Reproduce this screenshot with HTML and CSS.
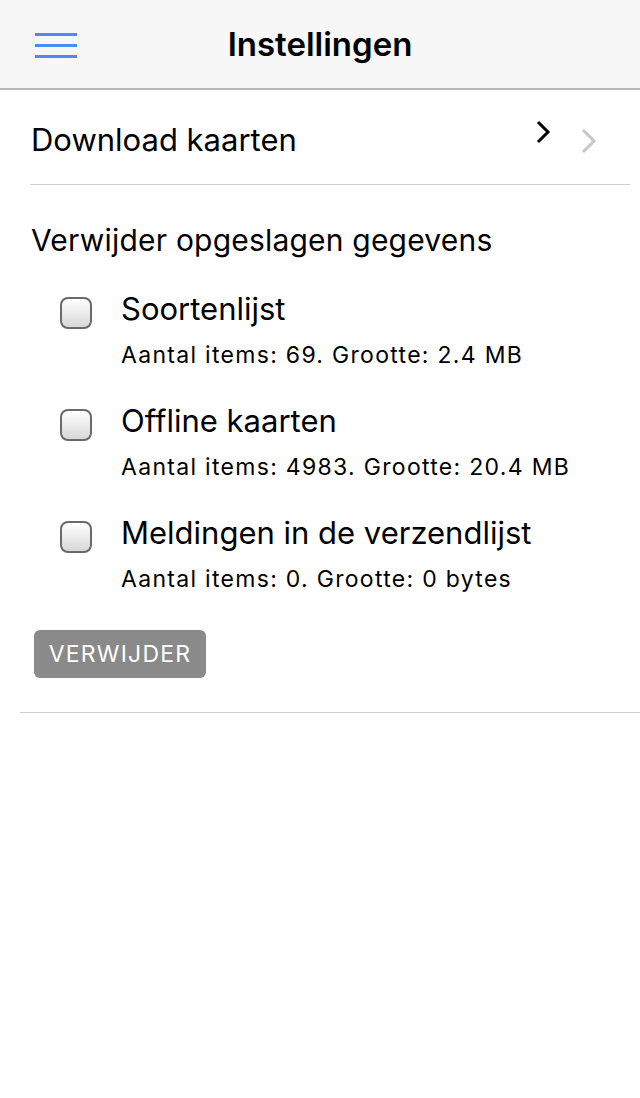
FILE: index.html
```html
<!DOCTYPE html>
<html lang="nl">
  <head>
    <meta charset="UTF-8" />
    <meta name="viewport" content="width=device-width, initial-scale=1.0" />
    <link rel="stylesheet" href="styles.css">
    <title>Instellingen</title>
  </head>
  <body>
    <header class="topbar">
      <button class="menu-btn" aria-label="Menu">
        <span></span>
        <span></span>
        <span></span>
      </button>
      <h1>Instellingen</h1>
    </header>

    <main>
      <a class="nav-row" href="#">
        <span class="nav-label">Download kaarten</span>
        <span class="chevrons">
          <svg class="chev-dark" width="16" height="24" viewBox="0 0 16 24">
            <path d="M3 2 L13 12 L3 22" fill="none" stroke="#000" stroke-width="3" />
          </svg>
          <svg class="chev-light" width="18" height="26" viewBox="0 0 18 26">
            <path d="M3 2 L14 13 L3 24" fill="none" stroke="#c7c7cc" stroke-width="3" />
          </svg>
        </span>
      </a>

      <section class="clear-data">
        <h2>Verwijder opgeslagen gegevens</h2>

        <label class="item">
          <input type="checkbox" />
          <span class="item-text">
            <span class="item-title">Soortenlijst</span>
            <span class="item-info">Aantal items: 69. Grootte: 2.4 MB</span>
          </span>
        </label>

        <label class="item">
          <input type="checkbox" />
          <span class="item-text">
            <span class="item-title">Offline kaarten</span>
            <span class="item-info">Aantal items: 4983. Grootte: 20.4 MB</span>
          </span>
        </label>

        <label class="item">
          <input type="checkbox" />
          <span class="item-text">
            <span class="item-title">Meldingen in de verzendlijst</span>
            <span class="item-info">Aantal items: 0. Grootte: 0 bytes</span>
          </span>
        </label>

        <button class="delete-btn">VERWIJDER</button>
      </section>
    </main>
  </body>
</html>
```

FILE: styles.css
```css
* {
  margin: 0;
  padding: 0;
  box-sizing: border-box;
  font-family: Inter, "Noto Sans", sans-serif;
}

body {
  background-color: #fff;
  color: #000;
}

.topbar {
  height: 90px;
  background-color: #f7f7f7;
  border-bottom: 2px solid #b8b8b8;
  display: flex;
  align-items: center;
  justify-content: center;
  position: relative;
}

.topbar h1 {
  font-size: 33px;
  font-weight: 600;
}

.menu-btn {
  position: absolute;
  left: 35px;
  top: 33px;
  width: 42px;
  background: none;
  border: none;
  display: flex;
  flex-direction: column;
  gap: 8px;
}

.menu-btn span {
  display: block;
  height: 3px;
  background-color: #4a8cf7;
}

.nav-row {
  margin: 0 10px 0 30px;
  height: 95px;
  border-bottom: 1px solid #d0d0d0;
  display: flex;
  align-items: center;
  justify-content: space-between;
  text-decoration: none;
  color: #000;
}

.nav-label {
  margin-left: 1px;
  margin-top: 4px;
  font-size: 31px;
}

.chevrons {
  display: flex;
  align-items: flex-start;
  gap: 29px;
  margin-right: 32px;
  height: 34px;
}

.chev-light {
  margin-top: 8px;
}

.clear-data {
  margin-left: 20px;
  padding: 37px 0 34px 11px;
  border-bottom: 1px solid #d0d0d0;
}

.clear-data h2 {
  font-size: 30px;
  font-weight: 400;
  letter-spacing: 0.2px;
  margin-bottom: 27px;
}

.item {
  display: flex;
  align-items: flex-start;
  gap: 29px;
  padding-left: 29px;
  height: 112px;
}

.item input {
  appearance: none;
  width: 32px;
  height: 32px;
  margin-top: 12px;
  border: 2px solid #6a6a6a;
  border-radius: 8px;
  background: linear-gradient(#ffffff, #d8d8d8);
}

.item-title {
  display: block;
  font-size: 31px;
  line-height: 48px;
}

.item-info {
  display: block;
  font-size: 23px;
  line-height: 44px;
  letter-spacing: 1.3px;
}

.delete-btn {
  margin: 9px 0 0 3px;
  width: 172px;
  height: 48px;
  border: none;
  border-radius: 6px;
  background-color: #8a8a8a;
  color: #fff;
  font-size: 23px;
  letter-spacing: 1.2px;
}
```
